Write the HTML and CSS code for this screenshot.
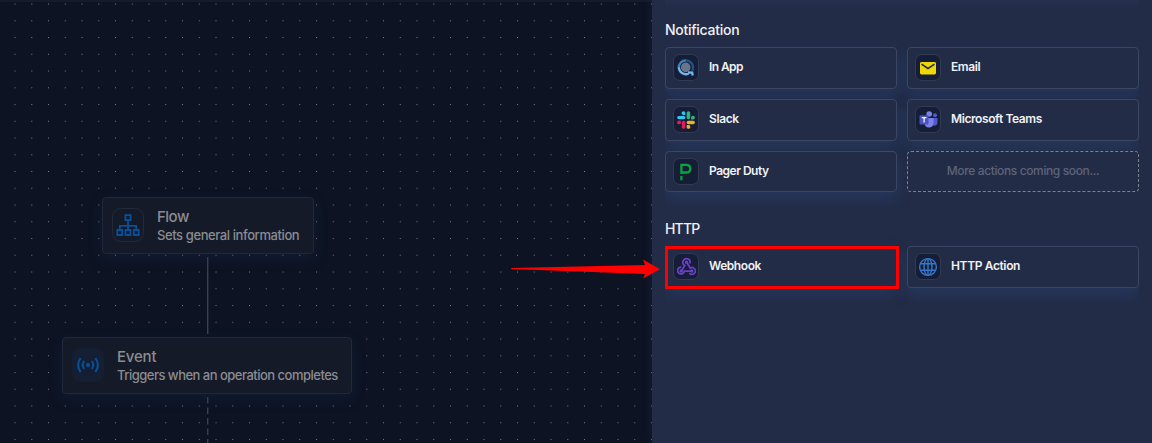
FILE: index.html
```
<!DOCTYPE html>
<html lang="en">
<head>
<meta charset="utf-8">
<title>Flow actions</title>
<link rel="stylesheet" href="styles.css">
</head>
<body>
<div class="app">
  <main class="canvas">
    <svg class="dots" width="652" height="443">
      <defs><pattern id="grid" x="6.625" y="-4.375" width="16.75" height="16.75" patternUnits="userSpaceOnUse"><rect x="7.875" y="7.875" width="1.05" height="1.05" fill="#74767b"/></pattern></defs>
      <rect width="652" height="443" fill="url(#grid)"/>
    </svg>
    <svg class="edges" width="652" height="443" fill="none" stroke="#3d404c" stroke-width="1.4">
      <path d="M207.7 257V334"/><path d="M207.7 397V443" stroke-dasharray="6.5 4"/>
    </svg>
    <section class="node flow">
      <span class="node-icon outlined"><svg width="24" height="24" viewBox="0 0 24 24" fill="none" stroke="#07509a" stroke-width="1.8"><path d="M9.4 2.2h5.2v5H9.4zM1.3 17h4.9v5H1.3zM9.5 17h4.9v5H9.5zM17.8 17h4.9v5h-4.9zM12 7.2V17M3.8 17v-4.2h16.4V17"/></svg></span>
      <div><h3 class="t-flow">Flow</h3><p class="t-sets">Sets general information</p></div>
    </section>
    <section class="node event">
      <span class="node-icon filled"><svg width="24" height="24" viewBox="0 0 24 24" fill="none" stroke="#07509a" stroke-width="2"><circle cx="12" cy="12" r="2.1" fill="#07509a" stroke="none"/><path d="M8.2 8q-3 4 0 8M15.8 8q3 4 0 8M4.6 5q-5 7 0 14M19.4 5q5 7 0 14"/></svg></span>
      <div><h3 class="t-event">Event</h3><p class="t-triggers">Triggers when an operation completes</p></div>
    </section>
  </main>
  <aside class="panel">
    <div class="previous"></div>
    <h2 class="t-notification">Notification</h2>
    <div class="actions">
      <div class="card"><span class="icon"><svg width="18" height="18" viewBox="0 0 18 18" fill="none"><circle cx="8.7" cy="8.4" r="4.8" fill="#68758e"/><path d="M9 1.4A7 7 0 0 0 1.8 8.8" stroke="#3d83bd" stroke-width="2.3"/><path d="M8.7 1.4A7.1 7.1 0 0 1 15.2 11.8" stroke="#1c5583" stroke-width="2.3"/><path d="M1.8 8.3a7 7 0 0 0 9.8 6.3M11 13.5l4.2.2.5 2.8" stroke="#72b5e8" stroke-width="2.3"/></svg></span><span class="t-inapp">In App</span></div>
      <div class="card"><span class="icon"><svg width="18" height="18" viewBox="0 0 18 18"><rect x="1" y="3" width="16" height="12.4" rx="1.4" fill="#edd60c"/><path d="M2.5 5.2L9 9.5l6.5-4.3" fill="none" stroke="#222b3d" stroke-width="1.5"/></svg></span><span class="t-email">Email</span></div>
      <div class="card"><span class="icon"><svg width="18" height="18" viewBox="0 0 24 24"><g fill="#36c5f0"><circle cx="8.6" cy="2.7" r="2.5"/><path d="M8.6 5.2h2.5V2.7z"/><rect x=".2" y="6.5" width="10.9" height="4.6" rx="2.3"/></g><g fill="#2eb67d"><circle cx="21.3" cy="8.8" r="2.5"/><path d="M18.8 8.8v2.4h2.5z"/><rect x="12.9" y=".2" width="4.7" height="10.9" rx="2.3"/></g><g fill="#ecb22e"><circle cx="15.3" cy="21.3" r="2.5"/><path d="M15.3 18.8h-2.4v2.5z"/><rect x="12.9" y="12.9" width="10.9" height="4.7" rx="2.3"/></g><g fill="#e01e5a"><circle cx="2.7" cy="15.3" r="2.5"/><path d="M5.2 15.3v-2.4H2.7z"/><rect x="6.5" y="12.9" width="4.6" height="10.9" rx="2.3"/></g></svg></span><span class="t-slack">Slack</span></div>
      <div class="card"><span class="icon"><svg width="19" height="18" viewBox="0 0 19 18"><circle cx="16" cy="4.2" r="2" fill="#5059c9"/><path d="M13 7h5.5v4.8a3.1 3.1 0 0 1-5.5 1.8z" fill="#5059c9"/><circle cx="10.2" cy="3" r="2.8" fill="#7b83eb"/><path d="M5.5 7h9v5.8a4.6 4.6 0 0 1-9 0z" fill="#7b83eb"/><rect x=".5" y="4.2" width="9" height="9.2" rx=".8" fill="#4b53bc"/><path d="M2.8 6.7h4.6M5.1 6.7v4.8" stroke="#fff" stroke-width="1.2"/></svg></span><span class="t-teams">Microsoft Teams</span></div>
      <div class="card last"><span class="icon"><svg width="18" height="18" viewBox="0 0 18 18" fill="none" stroke="#08a33b" stroke-width="2.3"><path d="M4.4 11V1.9h4.7q4.2 0 4.2 3.8t-4.2 3.8H4.4M4.4 13v4.2"/></svg></span><span class="t-pager">Pager Duty</span></div>
      <div class="card last soon"><span class="t-more">More actions coming soon...</span></div>
    </div>
    <h2 class="http t-http">HTTP</h2>
    <div class="actions">
      <div class="card"><span class="icon"><svg width="19" height="19" viewBox="0 0 24 24" fill="none" stroke="#6a40c6" stroke-width="2.1" stroke-linecap="round"><path d="M4.9 12.7a4.3 4.3 0 1 0 4.4 5.1h7M16.5 7.5a4.6 4.6 0 1 0-6.7 3.2L5.6 17.7M12.2 6.7l4.5 7.2a4.3 4.3 0 1 1-.6 7"/><circle cx="5.4" cy="17.6" r="1.2"/><circle cx="12.1" cy="6.6" r="1.2"/><circle cx="18.6" cy="17.8" r="1.2"/></svg></span><span class="t-webhook">Webhook</span></div>
      <div class="card"><span class="icon"><svg width="20" height="20" viewBox="0 0 20 20" fill="none" stroke="#3478ca" stroke-width="1.4"><circle cx="10" cy="10" r="8.4"/><ellipse cx="10" cy="10" rx="4" ry="8.4"/><path d="M10 1.6v16.8M2.5 6.8h15M2.5 13.2h15"/></svg></span><span class="t-action">HTTP Action</span></div>
    </div>
  </aside>
  <div class="highlight"></div>
  <svg class="arrow" width="150" height="24" viewBox="0 0 150 24"><path d="M0 8L134 5l-2-5.5L149 9.2 132 18.5l2-4.5L0 9z" fill="#f00"/></svg>
</div>
</body>
</html>
```
FILE: styles.css
```
* { box-sizing: border-box; }
body { margin: 0; font-family: Inter, "Open Sans", sans-serif; }
h2, h3, p { margin: 0; font-weight: 500; white-space: nowrap; }
svg { display: block; flex: none; }
.app { position: relative; display: flex; width: 1152px; height: 443px; overflow: hidden; background: #0d1322; }
.canvas { position: relative; width: 652px; flex: none; border-top: 2px solid #151b2c; }
.dots, .edges { position: absolute; top: -2px; left: 0; }
.node { position: absolute; display: flex; gap: 13px; padding: 9px; height: 57px; background: #151a29; border: 1px solid #20283a; border-radius: 4px; box-shadow: 0 5px 14px rgba(24, 49, 91, .28); color: #8b8c90; }
.flow { left: 102px; top: 195px; width: 212px; }
.event { left: 62px; top: 335px; width: 290px; }
.node-icon { display: flex; align-items: center; justify-content: center; width: 32px; height: 34px; border-radius: 9px; flex: none; margin-top: 1px; }
.outlined { border: 1px solid #222a39; }
.filled { background: #151f34; }
.node h3 { font-size: 15px; line-height: 20px; }
.node p { font-size: 13px; line-height: 17px; }
.panel { width: 500px; padding: 0 13px; background: #232c47; color: #f0f1f4; box-shadow: -2px 0 7px rgba(25, 47, 84, .35); position: relative; }
.previous { height: 7px; background: linear-gradient(#25304f, #232c47); }
.panel h2 { font-size: 14px; line-height: 20px; padding-top: 13px; height: 40px; }
.panel h2.http { height: 54px; padding-top: 27px; }
.actions { display: grid; grid-template-columns: 232px 232px; gap: 10px; overflow-x: clip; overflow-y: visible; }
.card { display: flex; gap: 10px; height: 42px; padding: 6px 7px; border: 1px solid #3d4661; border-radius: 4px; background: #232c47; box-shadow: 0 7px 14px rgba(38, 66, 116, .48); font-size: 12px; font-weight: 600; line-height: 26px; white-space: nowrap; }
.last { height: 41px; }
.icon { display: flex; align-items: center; justify-content: center; width: 26px; height: 27px; flex: none; border: 1px solid #303a50; border-radius: 7px; background: #161e37; }
.soon { justify-content: center; border: 1px dashed #7c828b; color: #5c647a; font-weight: 500; box-shadow: none; }
.highlight { position: absolute; left: 665px; top: 246px; width: 234px; height: 43px; border: 3px solid #f00; }
.arrow { position: absolute; left: 511px; top: 260px; overflow: visible; }

.t-flow { letter-spacing: -.5px; }
.node .t-sets { letter-spacing: -.41px; }
.t-event { letter-spacing: -.2px; }
.node .t-triggers { letter-spacing: -.51px; }
.t-notification { letter-spacing: -.27px; }
.t-inapp { letter-spacing: -.6px; }
.t-email, .t-slack { letter-spacing: -.4px; }
.t-teams { letter-spacing: -.4px; }
.t-pager { letter-spacing: -.5px; }
.t-more { letter-spacing: -.38px; }
.t-http { letter-spacing: -.8px; }
.t-webhook { letter-spacing: -.45px; }
.t-action { letter-spacing: -.37px; }
```
